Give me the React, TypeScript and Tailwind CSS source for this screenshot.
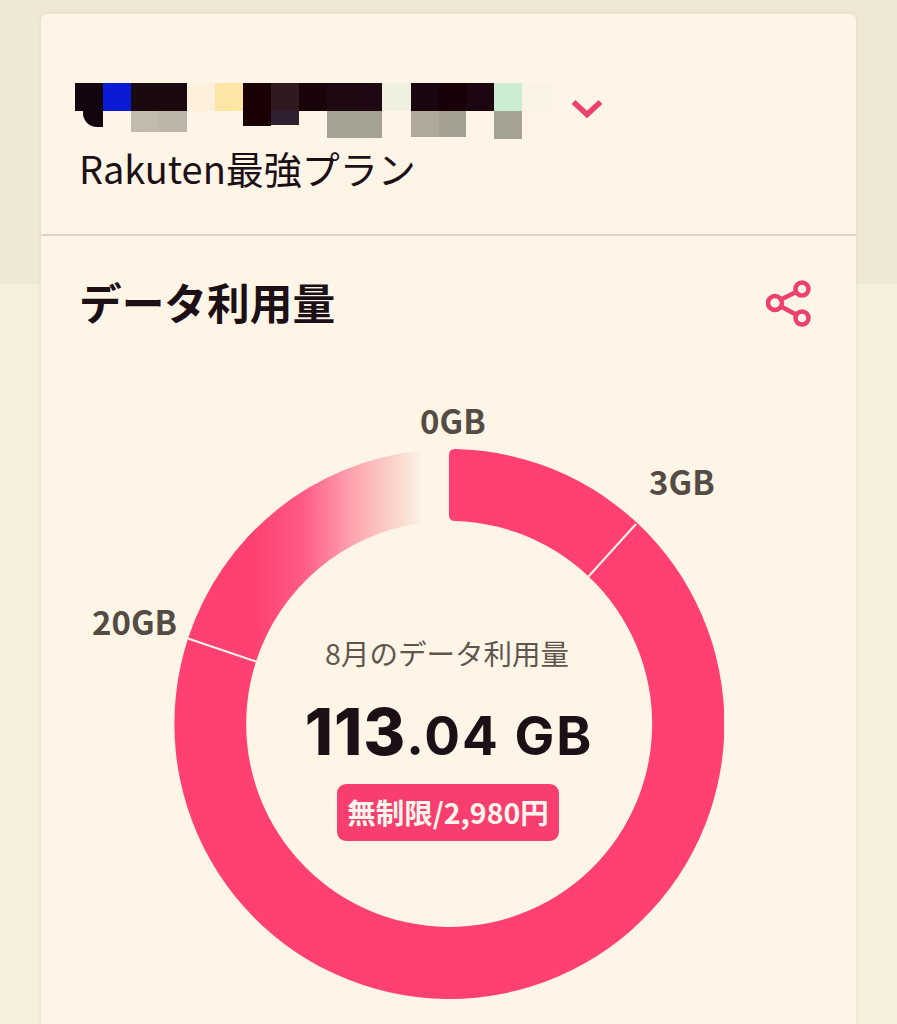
const JP = "font-['Noto_Sans_CJK_JP','Noto_Sans',sans-serif]";

const mosaic: { w: number; top: string; bottom?: string; h?: number }[] = [
  { w: 28, top: "bg-[#14060e]" },
  { w: 28, top: "bg-[#0a1bd6]" },
  { w: 28, top: "bg-[#1a0a10]", bottom: "bg-[#c2bbab]", h: 21 },
  { w: 28, top: "bg-[#1a0a10]", bottom: "bg-[#bdb6a7]", h: 21 },
  { w: 28, top: "bg-[#fdf0dc]" },
  { w: 28, top: "bg-[#fde6a4]" },
  { w: 28, top: "bg-[#190004]", bottom: "bg-[#190004]", h: 15 },
  { w: 28, top: "bg-[#301a20]", bottom: "bg-[#2f1f30]", h: 14 },
  { w: 28, top: "bg-[#190509]" },
  { w: 28, top: "bg-[#1e0812]", bottom: "bg-[#a5a193]", h: 27 },
  { w: 27, top: "bg-[#1e0812]", bottom: "bg-[#a5a193]", h: 27 },
  { w: 29, top: "bg-[#eff0df]" },
  { w: 28, top: "bg-[#1a0610]", bottom: "bg-[#b0a898]", h: 26 },
  { w: 27, top: "bg-[#170106]", bottom: "bg-[#a3a092]", h: 26 },
  { w: 28, top: "bg-[#1c0610]" },
  { w: 28, top: "bg-[#ccecd2]", bottom: "bg-[#a5a292]", h: 28 },
  { w: 31, top: "bg-[#fbf3e6]" },
];

function Donut() {
  // centre (275,275) in a 550 box; outer r 275, inner r 203
  return (
    <svg width="550" height="550" viewBox="0 0 550 550" className="block">
      <defs>
        <linearGradient id="fade" gradientUnits="userSpaceOnUse" x1="78" y1="0" x2="246" y2="0">
          <stop offset="0" stopColor="#ff4070" />
          <stop offset="0.3" stopColor="#ff5a85" />
          <stop offset="0.58" stopColor="#ffa0ad" />
          <stop offset="0.88" stopColor="#fadacf" />
          <stop offset="1" stopColor="#fdf2e4" />
        </linearGradient>
      </defs>
      <path
        d="M 246.5 1.5 A 275 275 0 0 0 14 189.5 L 82 212.5 A 203 203 0 0 1 246.5 74 Z"
        fill="url(#fade)"
      />
      <path
        d="M 275 6 Q 275 0 281 0 A 275 275 0 1 1 14 189.5 L 82 212.5 A 203 203 0 1 0 281 72 Q 275 72 275 66 Z"
        fill="#ff4070"
      />
      <line x1="14" y1="189.5" x2="82" y2="212.5" stroke="#fef5e7" strokeWidth="2" />
      <line x1="414" y1="128" x2="462" y2="75" stroke="#fef5e7" strokeWidth="2" />
    </svg>
  );
}

export default function App() {
  return (
    <div className={`h-[1024px] w-[897px] overflow-hidden bg-[linear-gradient(to_bottom,#f0e8d6_284px,#f7f0df_284px)] pt-[14px] pl-[41px] ${JP}`}>
      <div className="h-[1100px] w-[815px] rounded-t-md bg-[#fef5e7] shadow-[0_0_5px_rgba(120,100,60,0.12)]">
        <div className="h-[222px] border-b-2 border-[#dcd5c7] pt-[69px]">
          <div className="flex h-[62px] items-start pl-[34px]">
            <div className="flex items-start">
              {mosaic.map((m, i) => (
                <div key={i} style={{ width: m.w }} className="flex flex-col">
                  <div className={`h-[28px] ${m.top}`} />
                  {m.bottom && <div className={m.bottom} style={{ height: m.h }} />}
                  {i === 0 && <div className="ml-[8px] h-[16px] w-[20px] rounded-bl-[14px] bg-[#14060e]" />}
                </div>
              ))}
            </div>
            <svg width="34" height="24" viewBox="0 0 34 24" className="ml-[17px] mt-[15px]" fill="none">
              <path d="M3.5 4 L17 16.5 L30.5 4" stroke="#ee4070" strokeWidth="5.5" />
            </svg>
          </div>
          <p className="ml-[38px] mt-[-2px] text-[38px] leading-[50px] text-[#1c1016]">Rakuten最強プラン</p>
        </div>

        <div className="flex items-start justify-between pt-[35px] pl-[38px] pr-[44px]">
          <h1 className="text-[42.7px] leading-[60px] font-bold text-[#1c1016]">データ利用量</h1>
          <svg width="46" height="48" viewBox="0 0 46 48" fill="none" stroke="#ee4070" strokeWidth="4.5" className="mt-[8px]">
            <circle cx="9" cy="24" r="7" />
            <circle cx="36" cy="10" r="6.5" />
            <circle cx="36" cy="39" r="6.5" />
            <path d="M15 20.5 L30 13 M15 27.5 L30 35.5" />
          </svg>
        </div>

        <div className="relative ml-[133px] mt-[118px] h-[550px] w-[550px]">
          <Donut />
          <span className="absolute left-[246px] top-[-51px] text-[33px] leading-[44px] font-semibold text-[#544c44]">0GB</span>
          <span className="absolute left-[475px] top-[10px] text-[33px] leading-[44px] font-semibold text-[#544c44]">3GB</span>
          <span className="absolute left-[-82px] top-[150px] text-[33px] leading-[44px] font-semibold text-[#544c44]">20GB</span>
          <div className="absolute inset-0 flex flex-col items-center pt-[184px]">
            <p className="mr-[4px] text-[28.5px] leading-[40px] text-[#5f574d]">8月のデータ利用量</p>
            <p className="mt-[21px] flex items-baseline font-['Inter',sans-serif] font-extrabold leading-[76px] text-[#1c1016]">
              <span className="text-[64px] tracking-[1px]">113</span>
              <span className="text-[53px] font-bold tracking-[2px]">.04 GB</span>
            </p>
            <div className="mr-[2px] mt-[10px] flex h-[57px] w-[222px] items-center justify-center rounded-[9px] bg-[#f73e6e] text-[28.5px] font-bold text-[#fff5ec]">
              無制限/2,980円
            </div>
          </div>
        </div>
      </div>
    </div>
  );
}
